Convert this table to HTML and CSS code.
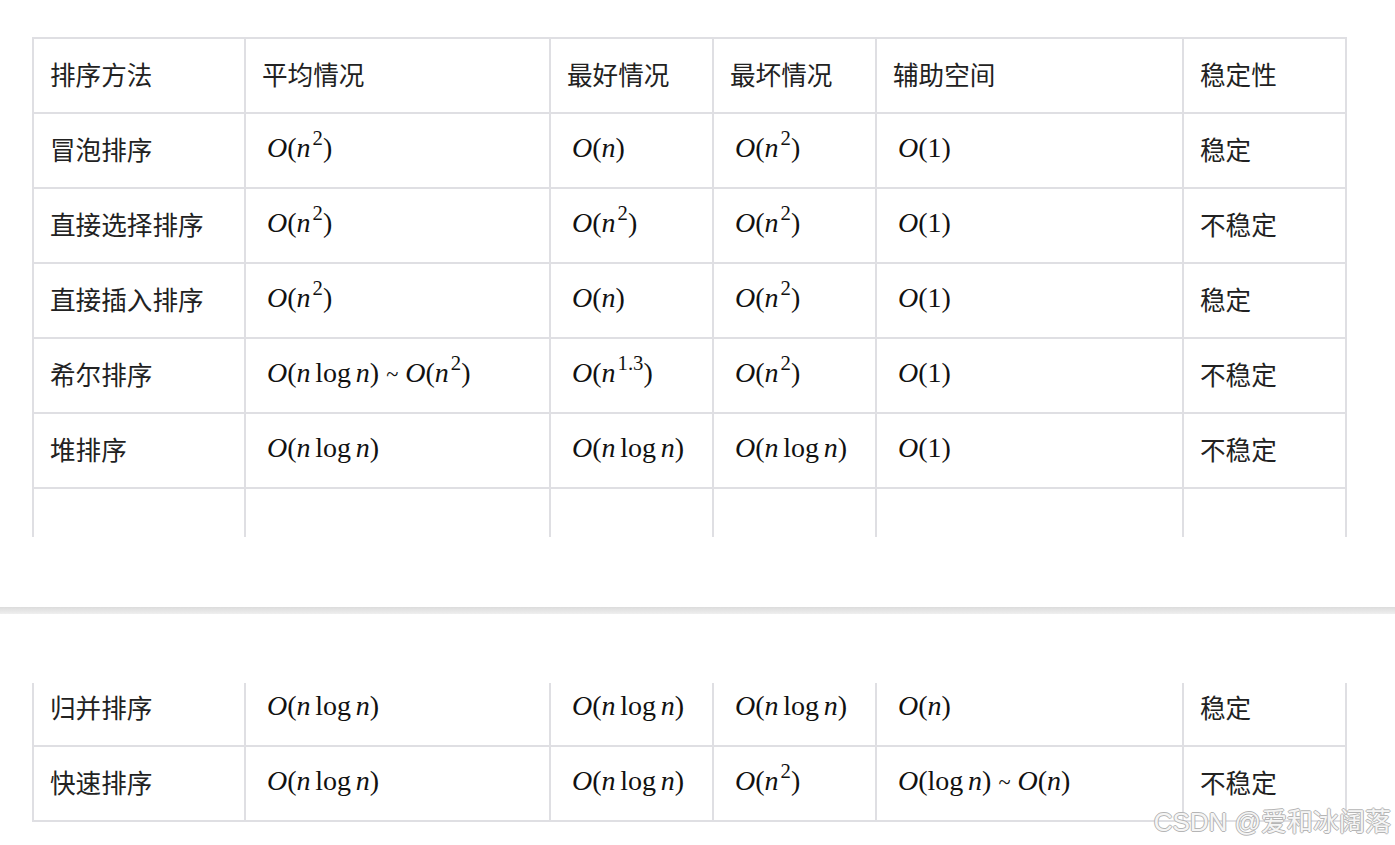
FILE: index.html
```html
<!DOCTYPE html>
<html lang="zh-CN">
<head>
<meta charset="utf-8">
<title>排序方法比较</title>
<link rel="stylesheet" href="styles.css">
</head>
<body>
<div class="page page1">
  <div class="grid">
    <div class="cell">排序方法</div>
    <div class="cell">平均情况</div>
    <div class="cell">最好情况</div>
    <div class="cell">最坏情况</div>
    <div class="cell">辅助空间</div>
    <div class="cell">稳定性</div>

    <div class="cell">冒泡排序</div>
    <div class="cell"><span class="m"><i>O</i>(<i>n</i><sup>2</sup>)</span></div>
    <div class="cell"><span class="m"><i>O</i>(<i>n</i>)</span></div>
    <div class="cell"><span class="m"><i>O</i>(<i>n</i><sup>2</sup>)</span></div>
    <div class="cell"><span class="m"><i>O</i>(1)</span></div>
    <div class="cell">稳定</div>

    <div class="cell">直接选择排序</div>
    <div class="cell"><span class="m"><i>O</i>(<i>n</i><sup>2</sup>)</span></div>
    <div class="cell"><span class="m"><i>O</i>(<i>n</i><sup>2</sup>)</span></div>
    <div class="cell"><span class="m"><i>O</i>(<i>n</i><sup>2</sup>)</span></div>
    <div class="cell"><span class="m"><i>O</i>(1)</span></div>
    <div class="cell">不稳定</div>

    <div class="cell">直接插入排序</div>
    <div class="cell"><span class="m"><i>O</i>(<i>n</i><sup>2</sup>)</span></div>
    <div class="cell"><span class="m"><i>O</i>(<i>n</i>)</span></div>
    <div class="cell"><span class="m"><i>O</i>(<i>n</i><sup>2</sup>)</span></div>
    <div class="cell"><span class="m"><i>O</i>(1)</span></div>
    <div class="cell">稳定</div>

    <div class="cell">希尔排序</div>
    <div class="cell"><span class="m"><i>O</i>(<i>n</i><span class="op">log</span><i>n</i>) <span class="tl">~</span> <i>O</i>(<i>n</i><sup>2</sup>)</span></div>
    <div class="cell"><span class="m"><i>O</i>(<i>n</i><sup>1.3</sup>)</span></div>
    <div class="cell"><span class="m"><i>O</i>(<i>n</i><sup>2</sup>)</span></div>
    <div class="cell"><span class="m"><i>O</i>(1)</span></div>
    <div class="cell">不稳定</div>

    <div class="cell">堆排序</div>
    <div class="cell"><span class="m"><i>O</i>(<i>n</i><span class="op">log</span><i>n</i>)</span></div>
    <div class="cell"><span class="m"><i>O</i>(<i>n</i><span class="op">log</span><i>n</i>)</span></div>
    <div class="cell"><span class="m"><i>O</i>(<i>n</i><span class="op">log</span><i>n</i>)</span></div>
    <div class="cell"><span class="m"><i>O</i>(1)</span></div>
    <div class="cell">不稳定</div>

    <div class="cell"></div>
    <div class="cell"></div>
    <div class="cell"></div>
    <div class="cell"></div>
    <div class="cell"></div>
    <div class="cell"></div>
  </div>
</div>

<div class="sep"></div>

<div class="page page2">
  <div class="clip">
    <div class="grid grid2">
      <div class="cell">归并排序</div>
      <div class="cell"><span class="m"><i>O</i>(<i>n</i><span class="op">log</span><i>n</i>)</span></div>
      <div class="cell"><span class="m"><i>O</i>(<i>n</i><span class="op">log</span><i>n</i>)</span></div>
      <div class="cell"><span class="m"><i>O</i>(<i>n</i><span class="op">log</span><i>n</i>)</span></div>
      <div class="cell"><span class="m"><i>O</i>(<i>n</i>)</span></div>
      <div class="cell">稳定</div>

      <div class="cell">快速排序</div>
      <div class="cell"><span class="m"><i>O</i>(<i>n</i><span class="op">log</span><i>n</i>)</span></div>
      <div class="cell"><span class="m"><i>O</i>(<i>n</i><span class="op">log</span><i>n</i>)</span></div>
      <div class="cell"><span class="m"><i>O</i>(<i>n</i><sup>2</sup>)</span></div>
      <div class="cell"><span class="m"><i>O</i>(<span class="op op0">log</span><i>n</i>) <span class="tl">~</span> <i>O</i>(<i>n</i>)</span></div>
      <div class="cell">不稳定</div>
    </div>
  </div>
</div>

<div class="watermark">CSDN @爱和冰阔落</div>
</body>
</html>
```

FILE: styles.css
```css
html, body {
  margin: 0;
  padding: 0;
  background: #ffffff;
}

body {
  position: relative;
  height: 845px;
  overflow: hidden;
  font-family: "Noto Sans CJK SC", "Noto Sans", sans-serif;
  color: #222222;
}

.page1 {
  box-sizing: border-box;
  height: 537px;
  padding: 37px 0 0 32px;
  overflow: hidden;
}

.sep {
  margin-top: 70px;
  height: 7px;
  background: linear-gradient(#dcdcdc, #efefef);
}

.page2 {
  padding: 69px 0 0 32px;
}

.clip {
  overflow: hidden;
}

.grid {
  display: grid;
  grid-template-columns: 212px 305px 163px 163px 307px 163px;
  grid-auto-rows: 75px;
  width: 1313px;
  border-right: 2px solid #dfdfe3;
}

.grid2 {
  margin-top: -13px;
  border-bottom: 2px solid #dfdfe3;
}

.cell {
  box-sizing: border-box;
  display: flex;
  align-items: center;
  padding: 0 0 5px 16px;
  border-left: 2px solid #dfdfe3;
  border-top: 2px solid #dfdfe3;
  font-size: 25.6px;
  white-space: nowrap;
}

.m {
  font-family: "Liberation Serif", "DejaVu Serif", serif;
  font-size: 28px;
  color: #111111;
  margin-left: 5px;
}

.m i {
  font-style: italic;
}

.m sup {
  font-size: 0.74em;
  vertical-align: 0.58em;
  line-height: 0;
  margin-left: 2px;
}

.op {
  margin: 0 0.17em;
}

.op0 {
  margin-left: 0;
}

.tl {
  font-size: 0.8em;
}

.watermark {
  position: absolute;
  right: 4px;
  top: 801px;
  font-family: "Liberation Sans", "Noto Sans CJK SC", sans-serif;
  font-size: 26px;
  color: rgba(255, 255, 255, 0.9);
  text-shadow: 1px 0 0 #b5b5b5, -1px 0 0 #b5b5b5, 0 1px 0 #b5b5b5, 0 -1px 0 #b5b5b5;
}
```
